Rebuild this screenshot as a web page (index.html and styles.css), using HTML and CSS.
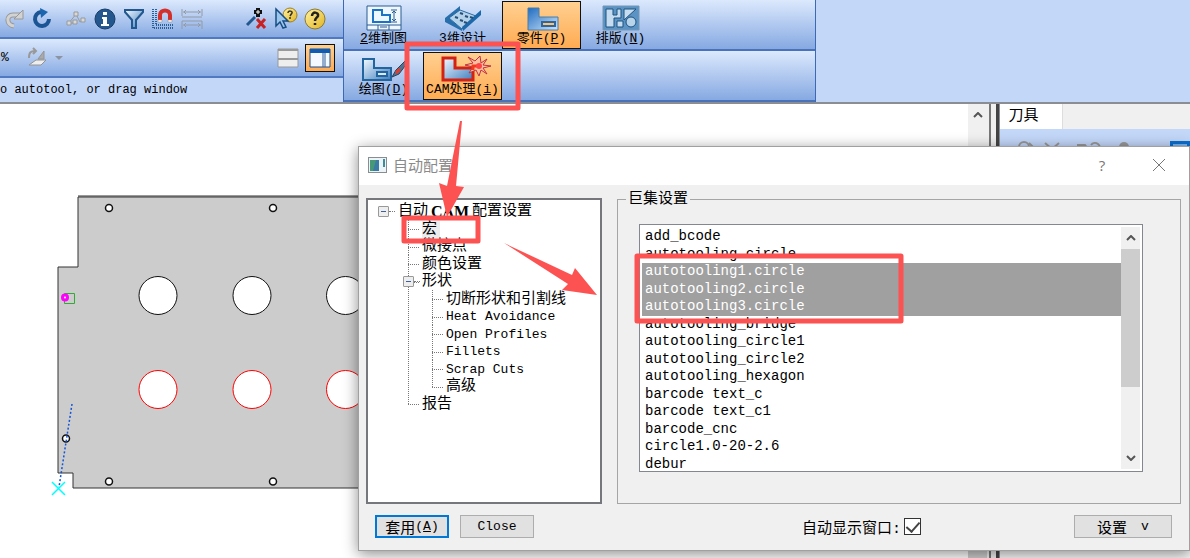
FILE: index.html
```
<!DOCTYPE html>
<html lang="zh-CN">
<head>
  <meta charset="UTF-8"/>
  <meta name="viewport" content="width=device-width,initial-scale=1.0"/>
  <title>自动配置</title>
  <link rel="stylesheet" href="styles.css">
</head>
<body>
  <svg class="defs" width="0" height="0" aria-hidden="true">
    <defs>
      <linearGradient id="steel" x1="0" y1="0" x2="1" y2="1"><stop offset="0" stop-color="#f4faff"/><stop offset="1" stop-color="#3f7fc0"/></linearGradient>
      <linearGradient id="blue" x1="0" y1="0" x2="1" y2="1"><stop offset="0" stop-color="#1f6cc0"/><stop offset="1" stop-color="#cfe6fa"/></linearGradient>
      <linearGradient id="gold" x1="0" y1="0" x2="1" y2="1"><stop offset="0" stop-color="#fff3a0"/><stop offset="1" stop-color="#e2b422"/></linearGradient>
    </defs>
  </svg>

  <header class="header">
    <div class="tools">
      <div class="bar">
        <button class="tool" aria-label="Redo"><svg viewBox="0 0 24 24"><path d="M13 19C5 18 5 8 12 8h8" fill="none" stroke="#989898" stroke-width="5"/><path d="M13 19C5 18 5 8 12 8h7" fill="none" stroke="#d2d2d2" stroke-width="3"/><path d="M22 3v9h-9z" fill="#d2d2d2" stroke="#989898"/></svg></button>
        <button class="tool" aria-label="Refresh"><svg viewBox="0 0 24 24"><path d="M19 12a7 7 0 1 1-8-7" fill="none" stroke="#1c5594" stroke-width="4"/><path d="M10 1l8 4-7 6z" fill="#1c66b0"/></svg></button>
        <button class="tool gap" aria-label="Nodes"><svg viewBox="0 0 24 24"><path d="M5 16l7-9 4 8 5-2M5 16l5 0" fill="none" stroke="#9a9a9a"/><g fill="#d8d8d8" stroke="#999"><path d="M3 14h4v4H3zM10 5h4v4h-4zM9 13h4v4H9zM17 11h4v4h-4z"/></g></svg></button>
        <button class="tool" aria-label="Info"><svg viewBox="0 0 24 24"><circle cx="12" cy="12" r="10" fill="#24578d" stroke="#173e68"/><path d="M10 5h4v3h-4zM9 10h5v7h2v2H8v-2h2v-5H9z" fill="#fff"/></svg></button>
        <button class="tool" aria-label="Filter"><svg viewBox="0 0 24 24"><path d="M3 3h18v2l-7 8v8h-4v-8L3 5z" fill="url(#steel)" stroke="#23588f" stroke-width="2"/></svg></button>
        <button class="tool" aria-label="Snap"><svg viewBox="0 0 24 24"><path d="M2 2v19h21M5 2v16h18" fill="none" stroke="#2b5f98" stroke-width="2" stroke-dasharray="1 1"/><path d="M9 14V8c0-6 10-6 10 0v6" fill="none" stroke="#d3302b" stroke-width="4"/><path d="M7 13h4v2H7zM17 13h4v2h-4z" fill="#fff" stroke="#888" stroke-width=".5"/></svg></button>
        <button class="tool" aria-label="Dimensions"><svg viewBox="0 0 24 24"><path d="M2 2v7M22 2v7M3 5h18M2 10h20M2 14h20M2 14v8M22 14v8M3 18h18M6 3L4 5l2 2M18 3l2 2-2 2M6 16l-2 2 2 2M18 16l2 2-2 2" fill="none" stroke="#929aa8"/></svg></button>
        <button class="tool far" aria-label="Remove point"><svg viewBox="0 0 24 24"><path d="M2 18L10 10" stroke="#23588f" stroke-width="3"/><path d="M9 5h8M13 1v9" stroke="#111" stroke-width="4"/><path d="M11 5h4M13 3v4" stroke="#fff"/><path d="M12 12l8 9M20 12l-8 9" stroke="#c92222" stroke-width="3"/></svg></button>
        <button class="tool" aria-label="Context help"><svg viewBox="0 0 24 24"><circle cx="16" cy="8" r="7" fill="url(#gold)" stroke="#9c802b"/><path d="M14 6c0-3 5-2 4 0l-2 3m0 1v2" fill="none" stroke="#333" stroke-width="1.5"/><path d="M2 2v17l4-4 3 6 3-1-3-6h5z" fill="#9cc6ec" stroke="#174d83" stroke-width="1.5"/></svg></button>
        <button class="tool" aria-label="Help"><svg viewBox="0 0 24 24"><circle cx="12" cy="12" r="10" fill="url(#gold)" stroke="#8f7a2c"/><path d="M9 9c0-5 7-4 6 0-1 2-3 2-3 5m0 2v2" fill="none" stroke="#222" stroke-width="2.5"/></svg></button>
      </div>
      <div class="bar">
        <span class="percent">%</span>
        <button class="tool" aria-label="Rotate view"><svg viewBox="0 0 24 24"><path d="M3 19l7-5h10l-5 5z" fill="#eee" stroke="#949494"/><path d="M12 13l6-8v8z" fill="#aaa" stroke="#949494"/><path d="M3 12c0-6 2-7 6-7M7 2l3 3-3 3" fill="none" stroke="#999" stroke-width="2"/></svg></button>
        <svg class="caret" viewBox="0 0 8 4"><path d="M0 0h8L4 4z" fill="#8c94a4"/></svg>
        <button class="tool right" aria-label="Split horizontally"><svg viewBox="0 0 24 24"><path d="M2 3h20v18H2z" fill="#eee" stroke="#999"/><path d="M2 4h20M2 13h20" stroke="#999" stroke-width="2"/></svg></button>
        <button class="tool pressed" aria-label="Side panel"><svg viewBox="0 0 24 24"><path d="M2 3h20v18H2z" fill="#f4f8ff" stroke="#164f95"/><path d="M2 3h20v4H2z" fill="#0f5cb0"/><path d="M15 7v14M17 7v14" stroke="#34639c"/></svg></button>
      </div>
      <p class="hint">o autotool, or drag window</p>
    </div>

    <nav class="ribbon">
      <div class="ribbon-row">
        <button class="mode"><svg viewBox="0 0 36 26"><path d="M1 1h34v24H1z" fill="#eef6ff" stroke="#2a5d90"/><path d="M7 5h9v5h8v7H7z" fill="none" stroke="#1b73c6" stroke-width="2"/><path d="M25 5h6M25 17h6M28 6v10M26 8l2-2 2 2M26 14l2 2 2-2M1 20h34M12 20v5M23 20v5M14 22h7" fill="none" stroke="#2a5d90"/></svg><span><u>2</u>维制图</span></button>
        <button class="mode"><svg viewBox="0 0 36 26"><path d="M0 13L15 1v5L5 14l12 10v2L0 17z" fill="#286fac"/><path d="M4 13L15 5l16 6-14 13z" fill="#b4d2ea" stroke="#2a6ba5"/><path d="M17 22L36 5v5L18 26z" fill="#1d68a8"/><path d="M10 12l3 1M15 8l3 1M15 15l3 1M20 11l3 1M19 17l3 1M25 12l3 1" stroke="#264f78" stroke-width="2"/></svg><span>3维设计</span></button>
        <button class="mode pressed"><svg viewBox="0 0 36 26"><path d="M4 3h11v9h19v13H4z" fill="url(#blue)" stroke="#477cac"/><path d="M18 17h13v4H18z" fill="#ffc36e" stroke="#2e669d" stroke-width="2"/></svg><span>零件(<u>P</u>)</span></button>
        <button class="mode"><svg viewBox="0 0 36 26"><path d="M0 1h36v24H0z" fill="#5b93c4" stroke="#7797b4"/><path d="M3 4h7v6h4V4h4v9h-7v9H3zM14 16h6v6h-6zM21 4h12L21 15z" fill="#c6dcf0" stroke="#1d527f"/><circle cx="28" cy="17" r="5" fill="#b8d4ea" stroke="#1d527f"/></svg><span>排版(<u>N</u>)</span></button>
      </div>
      <div class="ribbon-row">
        <button class="mode"><svg class="wide" viewBox="0 0 48 26"><path d="M3 3h11v9h17v12H3z" fill="url(#steel)" stroke="#22659e" stroke-width="2"/><path d="M17 16h10v4H17z" fill="#d7eaff" stroke="#22659e" stroke-width="2"/><path d="M32 21l4-7L46 4l2 2-9 12z" fill="#54708e" stroke="#2d4157"/><path d="M36 17l4-4" stroke="#e43a2c" stroke-width="3"/></svg><span>绘图(<u>D</u>)</span></button>
        <button class="mode pressed"><svg class="wide" viewBox="0 0 48 26"><path d="M4 2h12v10h18v12H4z" fill="url(#steel)" stroke="#d32213" stroke-width="3"/><path d="M41 0l1 7 6-4-4 6 8 1-8 2 4 6-6-4-2 6-3-6-7 3 4-6-8-2 8-2-5-6 7 4z" fill="#ffc0a0" stroke="#c03040"/><path d="M34 14v-4h6" fill="none" stroke="#f13a1d" stroke-width="3"/><circle cx="40" cy="10" r="3" fill="#f44"/></svg><span>CAM处理(<u>i</u>)</span></button>
      </div>
    </nav>
  </header>

  <main class="workspace">
    <section class="canvas">
      <svg width="100%" height="100%" role="img" aria-label="Part drawing">
        <g transform="translate(0 -104)" fill="none">
          <path d="M968 197H78v70H58v206h15v15h895z" fill="#ccc" stroke="#333"/>
          <path d="M78 196h890" stroke="#333"/>
          <g fill="#fff" stroke="#111"><circle cx="158" cy="295.500" r="19"/><circle cx="252" cy="295.500" r="19"/><circle cx="345.500" cy="295.500" r="19"/></g>
          <g fill="#fff" stroke="#f00"><circle cx="158" cy="389.500" r="19"/><circle cx="252" cy="389.500" r="19"/><circle cx="345.500" cy="389.500" r="19"/></g>
          <g fill="#fff" stroke="#111" stroke-width="1.500"><circle cx="109" cy="208" r="3.500"/><circle cx="273" cy="208" r="3.500"/><circle cx="109" cy="481.500" r="3.500"/><circle cx="273" cy="481.500" r="3.500"/><circle cx="66" cy="438.500" r="3.500"/></g>
          <path d="M64.500 293.500h10v10h-10z" stroke="#3a3"/>
          <circle cx="65" cy="297.500" r="2.500" fill="#fff" stroke="#f0f" stroke-width="3"/>
          <path d="M72 404L59 487" stroke="#15d" stroke-dasharray="2 2" stroke-width="1.500"/>
          <path d="M52 482l13 13M65 482l-13 13" stroke="#00ffff" stroke-width="1.500"/>
        </g>
      </svg>
    </section>
    <div class="scrollbar outer"><svg viewBox="0 0 10 6"><path d="M1 5l4-4 4 4" fill="none" stroke="#555" stroke-width="2"/></svg><i class="thumb"></i></div>
    <div class="splitter"></div>
    <aside class="side">
      <div class="tabs"><button class="tab">刀具</button></div>
      <div class="side-tools">
        <svg viewBox="0 0 130 24"><g fill="none" stroke="#999" stroke-width="2"><circle cx="9" cy="6" r="5"/><path d="M14 2l6 6M30 2l14 12M44 2L30 14M62 4h8l6 8M76 4a5 5 0 0 1 8 6"/></g><circle cx="109" cy="6" r="5" fill="#999"/><path d="M99 5h8v5h-8z" fill="#aaa"/></svg>
        <button class="tool on" aria-label="Show list"></button>
      </div>
      <div class="side-list"></div>
    </aside>
  </main>

  <section class="dialog" role="dialog" aria-labelledby="dialog-title">
    <div class="titlebar">
      <svg class="app-icon" viewBox="0 0 19 16"><path d="M0 0h19v16H0z" fill="#888d92"/><path d="M1 1h17v14H1z" fill="#edf4f8"/><path d="M2 3h9v11H2z" fill="#397ba4"/><path d="M2 3h6l-3 11H2z" fill="#479876"/><path d="M15 2h2v8h-2z" fill="#3f8b9a"/></svg>
      <h1 id="dialog-title">自动配置</h1>
      <button class="win help" aria-label="Help">?</button>
      <button class="win" aria-label="Close window"><svg viewBox="0 0 12 12"><path d="M0 0l12 12M12 0L0 12" stroke="#777"/></svg></button>
    </div>
    <div class="panes">
      <div class="tree">
        <div class="row root"><button class="expander" aria-label="Collapse"></button><span class="dots"></span>自动<b>CAM</b>配置设置</div>
        <ul>
          <li><div class="row"><span class="picked">宏</span></div></li>
          <li><div class="row">微接点</div></li>
          <li><div class="row">颜色设置</div></li>
          <li>
            <div class="row"><button class="expander" aria-label="Collapse"></button><span class="dots"></span>形状</div>
            <ul>
              <li><div class="row">切断形状和引割线</div></li>
              <li><div class="row en">Heat Avoidance</div></li>
              <li><div class="row en">Open Profiles</div></li>
              <li><div class="row en">Fillets</div></li>
              <li><div class="row en">Scrap Cuts</div></li>
              <li><div class="row">高级</div></li>
            </ul>
          </li>
          <li><div class="row">报告</div></li>
        </ul>
      </div>
      <fieldset class="macros">
        <legend><label for="macro-list">巨集设置</label></legend>
        <div class="listbox">
          <select id="macro-list" multiple size="14">
            <option>add_bcode</option>
            <option>autotooling.circle</option>
            <option selected>autotooling1.circle</option>
            <option selected>autotooling2.circle</option>
            <option selected>autotooling3.circle</option>
            <option>autotooling_bridge</option>
            <option>autotooling_circle1</option>
            <option>autotooling_circle2</option>
            <option>autotooling_hexagon</option>
            <option>barcode text_c</option>
            <option>barcode text_c1</option>
            <option>barcode_cnc</option>
            <option>circle1.0-20-2.6</option>
            <option>debur</option>
          </select>
          <div class="scrollbar">
            <svg viewBox="0 0 10 6"><path d="M1 5l4-4 4 4" fill="none" stroke="#555" stroke-width="2"/></svg>
            <i class="thumb"></i>
            <svg viewBox="0 0 10 6"><path d="M1 1l4 4 4-4" fill="none" stroke="#555" stroke-width="2"/></svg>
          </div>
        </div>
      </fieldset>
    </div>
    <div class="actions">
      <button class="btn primary"><span class="cn">套用</span>(<u>A</u>)</button>
      <button class="btn">Close</button>
      <label class="auto" for="auto-show">自动显示窗口:</label>
      <input type="checkbox" id="auto-show" checked>
      <button class="btn menu"><span class="cn">设置</span><span>v</span></button>
    </div>
  </section>

  <!-- step markers: CAM button, macro node, selected macros -->
  <svg class="marks" aria-hidden="true">
    <g fill="none" stroke="#fc5352" stroke-width="5" stroke-linejoin="round">
      <path d="M407 44h111v64H407z"/>
      <path d="M404 218h74v23h-74z"/>
      <path d="M637 256h264v65H637z"/>
    </g>
    <g fill="#fc5352">
      <path d="M460 121h2l-6 65 8 1-17 30-8-34 8 3z"/>
      <path d="M504 243l68 32 3-7 22 27-35-5 6-6z"/>
    </g>
  </svg>
</body>
</html>
```
FILE: styles.css
```
*{margin:0;padding:0;box-sizing:border-box;}
html{background:#fff;}
body{display:flex;flex-direction:column;min-height:100vh;overflow:hidden;font-family:"Liberation Mono","Noto Sans CJK SC",monospace;font-size:13px;color:#000;}
button,input,select{font:inherit;color:inherit;}
button{background:none;border:0;}
ul{list-style:none;}
.defs{position:absolute;}

/* toolbars */
.header{display:flex;background:#c3d7f9;border-bottom:2px solid #8a8d94;}
.tools{width:344px;border-right:1px solid #3c68b4;}
.bar{display:flex;align-items:center;gap:5px;height:39px;padding:0 8px 0 1px;background:linear-gradient(#dce9fd,#86a9e2);border-bottom:2px solid #5079bf;}
.tool{width:24px;height:24px;flex:none;}
.tool svg{display:block;width:100%;height:100%;}
.gap{margin-left:5px;}
.far{margin-left:36px;}
.percent{width:20px;}
.caret{width:8px;height:4px;}
.right{margin-left:auto;}
.bar .pressed{width:30px;height:28px;padding:1px 2px;}
.pressed{background:linear-gradient(#ffd091,#ffab52);border:1px solid #111;}
.hint{height:23px;line-height:24px;font-size:12px;white-space:pre;overflow:hidden;}
.ribbon{width:472px;border-right:1px solid #3c68b4;}
.ribbon-row{display:flex;height:51px;padding-top:1px;background:linear-gradient(#dce9fd,#86a9e2);border-bottom:2px solid #4a72b8;}
.mode{display:flex;flex-direction:column;align-items:center;width:79px;height:48px;padding-top:4px;line-height:15px;white-space:nowrap;}
.mode svg{width:36px;height:26px;overflow:visible;}
.mode svg.wide{width:48px;}
.mode.pressed{padding-top:3px;}

/* drawing area and tool panel */
.workspace{display:flex;flex:1;}
.canvas{flex:1;min-width:0;}
.canvas svg{display:block;}
.scrollbar{display:flex;flex-direction:column;align-items:center;width:19px;background:#f0f0f0;}
.scrollbar svg{width:10px;height:6px;margin:8px 0;flex:none;}
.thumb{width:100%;background:#cdcdcd;}
.outer .thumb{flex:1;margin-top:40px;}
.splitter{width:12px;background:#f0f0f0;border-left:2px solid #f0f0f0;border-right:3px solid #444;box-shadow:inset 2px 0 #777;}
.side{display:flex;flex-direction:column;width:191px;border-left:1px solid #8a8d94;}
.tabs{height:25px;background:#f0f0f0;}
.tab{width:63px;height:25px;padding-right:15px;background:#fff;border-right:1px solid #ddd;font-size:15px;line-height:22px;}
.side-tools{display:flex;justify-content:space-between;height:40px;padding:12px 0 0 15px;background:#c3d7f9;}
.side-tools svg{width:130px;height:24px;}
.tool.on{width:20px;background:#7db4ea;border:3px solid #0a6fd0;}
.side-list{flex:1;background:#f8f8f8;}

/* settings window */
.dialog{position:absolute;top:146px;left:358px;right:0;background:#f0f0f0;border:1px solid #a0a0a0;box-shadow:0 3px 14px rgba(0,0,0,.45);}
.titlebar{display:flex;align-items:center;height:38px;padding:0 24px 2px 9px;background:#fff;}
.app-icon{width:19px;height:16px;}
.titlebar h1{margin:0 auto 0 6px;font-size:15px;font-weight:400;color:#8a8a8a;}
.win{display:flex;align-items:center;justify-content:center;width:12px;height:24px;}
.win svg{width:12px;height:12px;}
.help{margin-right:45px;font-family:"Open Sans",sans-serif;font-size:15px;color:#777;}
.panes{display:grid;grid-template-columns:236px 1fr;gap:15px;padding:5px 8px 0 7px;}
.tree{margin-top:8px;padding:2px 0 0 10px;background:#fff;border:2px solid #75777c;font-size:15px;}
.row{display:flex;align-items:center;height:17px;line-height:17px;white-space:nowrap;}
li:nth-child(odd)>.row,.root{height:18px;}
.row b{width:44px;text-align:center;font-family:"Liberation Serif",serif;font-size:16px;}
.en{font-size:13px;}
.tree ul{margin-left:30px;}
.tree li ul{margin-left:10px;}
.tree li{padding-left:14px;background:repeating-linear-gradient(#777 0 1px,transparent 1px 2px) 0 0/1px 100% no-repeat,repeating-linear-gradient(90deg,#777 0 1px,transparent 1px 2px) 0 9px/12px 1px no-repeat;}
.tree li:last-child{background-size:1px 9px,12px 1px;}
.picked{padding-right:3px;background:#ececec;}
.expander{width:11px;height:11px;flex:none;background:linear-gradient(#3c5fa0,#3c5fa0) center/5px 1px no-repeat,#eee;border:1px solid #999;border-radius:1px;}
.dots{width:6px;height:1px;margin-right:2px;flex:none;border-top:1px dotted #777;}
.root .dots{margin-right:3px;}
li .expander{margin-left:-19px;}
.macros{min-width:0;padding:16px 37px 31px 21px;border:1px solid #a5a5a5;}
.macros legend{margin-left:-13px;padding:0 2px;font-size:15px;line-height:20px;}
.macros legend label{display:block;height:18px;}
.listbox{display:flex;height:248px;padding:2px;background:#fff;border:1px solid #828790;}
.listbox select{flex:1;min-width:0;height:244px;padding-top:1px;border:0;outline:0;background:#fff;overflow:hidden;font-size:14px;scrollbar-width:none;}
.listbox option{display:block;height:17px;min-height:17px;padding:0 0 0 3px;line-height:17px;}
.listbox option:nth-child(odd){height:18px;min-height:18px;}
.listbox option:checked{background:#a0a0a0 linear-gradient(#a0a0a0,#a0a0a0);-webkit-text-fill-color:#fff;}
.listbox .scrollbar{justify-content:space-between;}
.listbox .thumb{height:138px;margin-bottom:auto;}
.actions{display:flex;align-items:center;padding:11px 17px 12px 16px;}
.btn{display:flex;align-items:center;justify-content:center;width:74px;height:23px;margin-right:11px;background:#e1e1e1;border:1px solid #adadad;}
.primary{border:2px solid #0078d7;}
.cn,.auto{font-size:15px;}
.auto{margin-left:auto;}
.actions input{appearance:none;display:flex;justify-content:center;width:17px;height:17px;margin:0 153px 0 3px;background:#fff;border:1px solid #333;}
.actions input:checked::after{content:"";width:6px;height:11px;border:solid #444;border-width:0 2px 2px 0;transform:rotate(42deg);}
.menu{width:98px;gap:14px;margin-right:0;}

.marks{position:absolute;top:0;left:0;width:100%;height:100%;pointer-events:none;}
```
